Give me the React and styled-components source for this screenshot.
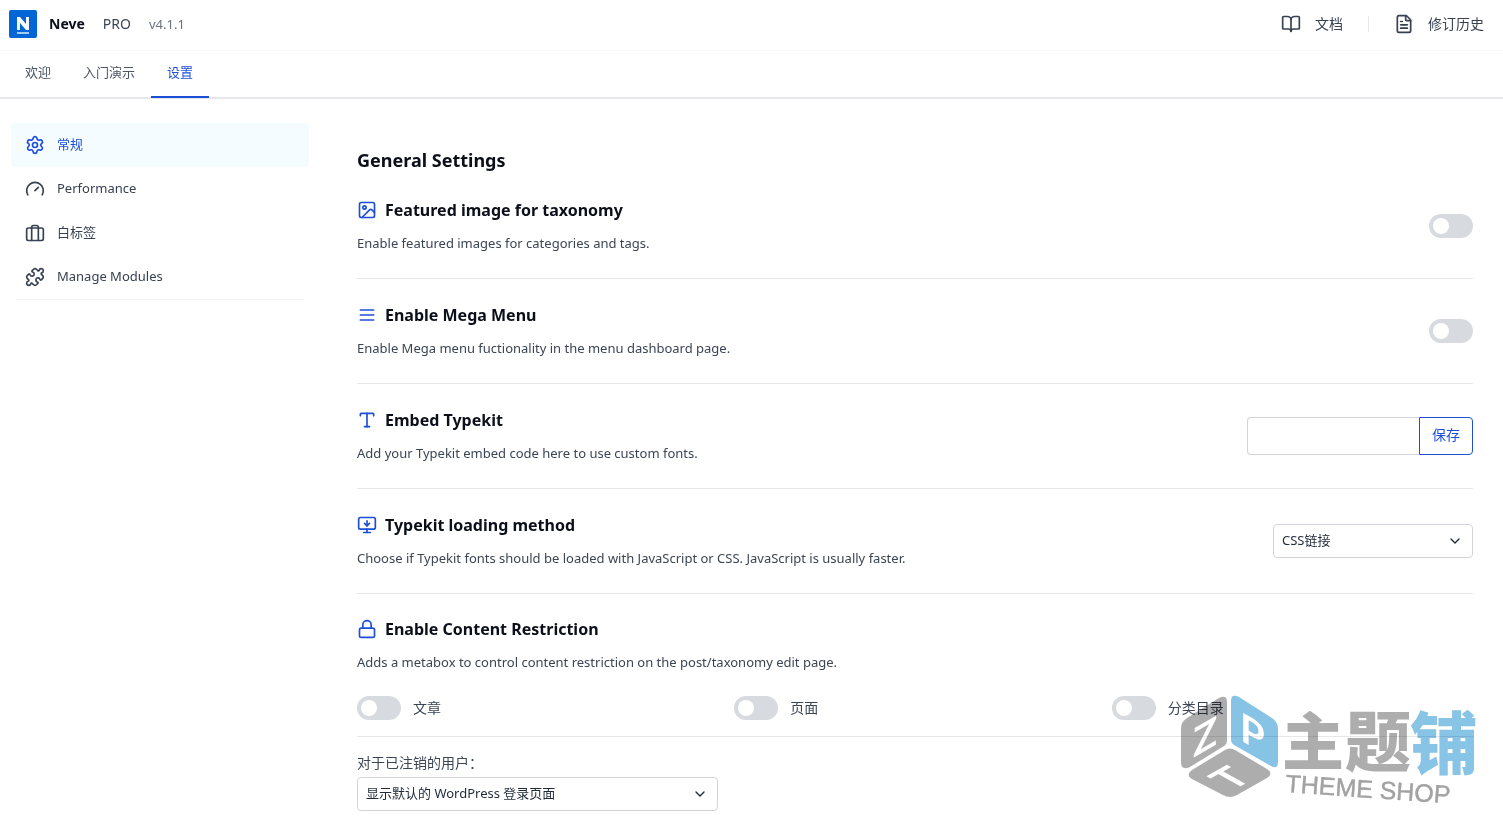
import React, { useState } from "react";
import styled, { createGlobalStyle } from "styled-components";
import {
    BookOpen,
    ChevronDown,
    FileText,
    Gauge,
    Image as ImageIcon,
    Lock,
    MonitorDown,
    Puzzle,
    Settings,
    Type,
} from "lucide-react";

const GlobalStyle = createGlobalStyle`
    * {
        box-sizing: border-box;
    }

    body {
        margin: 0;
        background: #fff;
        color: #3b4554;
        font-family: "Noto Sans", "Noto Sans CJK SC", sans-serif;
        font-size: 13px;
        line-height: 20px;
    }

    button, input, select {
        font: inherit;
        color: inherit;
    }
`

const Page = styled.div`
    position: relative;
    min-height: 100vh;
    overflow: hidden;
    background: #fff;
`

const Header = styled.header`
    display: flex;
    align-items: center;
    justify-content: space-between;
    padding: 10px 19px 12px 9px;
    border-bottom: 1px solid #f8f8f9;
`

const Brand = styled.div`
    display: flex;
    align-items: center;
    gap: 18px;
    line-height: 28px;
`

const BrandName = styled.div`
    display: flex;
    align-items: center;
    gap: 12px;
    color: #0b0f19;
    font-size: 14px;
    font-weight: 700;
`

const Plan = styled.span`
    font-size: 14px;
`

const Version = styled.span`
    color: #6b7280;
`

const HeaderLinks = styled.nav`
    display: flex;
    align-items: center;

    a {
        display: flex;
        align-items: center;
        gap: 14px;
        color: #374151;
        font-size: 14px;
        text-decoration: none;
    }

    a + a {
        margin-left: 25px;
        padding-left: 26px;
        background: linear-gradient(#e5e7eb, #e5e7eb) left center / 1px 16px no-repeat;
    }
`

const Tabs = styled.nav`
    display: flex;
    padding-left: 9px;
    border-bottom: 2px solid #e5e7eb;
`

const Tab = styled.a`
    margin-bottom: -1px;
    padding: 11px 16px 14px;
    border-bottom: 2px solid ${({ $active }) => ($active ? "#1d4ed8" : "transparent")};
    color: ${({ $active }) => ($active ? "#1d4ed8" : "#4b5563")};
    text-decoration: none;
`

const Body = styled.div`
    display: flex;
    align-items: flex-start;
    padding: 24px 30px 20px 11px;
    gap: 48px;
`

const Sidebar = styled.nav`
    flex: none;
    width: 298px;
`

const SideItem = styled.a`
    display: flex;
    align-items: center;
    gap: 12px;
    height: 44px;
    padding: 0 14px;
    border-radius: 4px;
    background: ${({ $active }) => ($active ? "#f5fcff" : "transparent")};
    color: ${({ $active }) => ($active ? "#1d4ed8" : "#374151")};
    text-decoration: none;

    span {
        padding-bottom: 2px;
    }
`

const SideRule = styled.hr`
    margin: 0 5px;
    border: 0;
    border-top: 1px solid #f3f4f6;
`

const Main = styled.main`
    flex: 1;
    min-width: 0;
    padding-top: 23px;
`

const PageTitle = styled.h1`
    margin: 0;
    color: #0b0f19;
    font-size: 18px;
    font-weight: 700;
    line-height: 28px;
`

const Section = styled.section`
    display: flex;
    align-items: center;
    justify-content: space-between;
    gap: 24px;
    padding: 24px 0;
    border-bottom: 1px solid #e5e7eb;
`

const SectionTitle = styled.h2`
    display: flex;
    align-items: center;
    gap: 8px;
    margin: 0 0 10px;
    color: #0b0f19;
    font-size: 16px;
    font-weight: 700;
    line-height: 24px;

    svg {
        color: #1d4ed8;
    }
`

const Description = styled.p`
    margin: 0;
    line-height: 22px;
`

const Switch = styled.input`
    appearance: none;
    flex: none;
    display: block;
    width: 44px;
    height: 24px;
    margin: 0;
    padding: 4px;
    border-radius: 12px;
    background: #d7dade;
    cursor: pointer;

    &::before {
        content: "";
        display: block;
        width: 16px;
        height: 16px;
        border-radius: 50%;
        background: #fff;
    }

    &:checked {
        background: #1d4ed8;
    }

    &:checked::before {
        margin-left: 20px;
    }
`

const InputGroup = styled.form`
    display: flex;
    height: 38px;
`

const TextInput = styled.input`
    width: 172px;
    padding: 0 8px;
    border: 1px solid #d1d5db;
    border-right: 0;
    border-radius: 4px 0 0 4px;
`

const SaveButton = styled.button`
    width: 54px;
    padding: 0 0 2px;
    border: 1px solid #1d4ed8;
    border-radius: 0 4px 4px 0;
    background: #fff;
    color: #1d4ed8;
    font-size: 14px;
`

const SelectBox = styled.div`
    display: grid;
    align-items: center;
    width: ${({ $width }) => $width || "100%"};
    color: #1f2937;

    select, svg {
        grid-area: 1 / 1;
    }

    select {
        appearance: none;
        width: 100%;
        height: 34px;
        padding: 0 32px 2px 8px;
        border: 1px solid #d1d5db;
        border-radius: 4px;
        background: #fff;
    }

    svg {
        justify-self: end;
        margin-right: 10px;
        pointer-events: none;
    }
`

const Restriction = styled.section`
    padding-top: 23px;
`

const Columns = styled.div`
    display: grid;
    grid-template-columns: repeat(3, 1fr);
    gap: 16px;
    padding: ${({ $ruled }) => ($ruled ? "23px 0 16px" : "16px 0 0")};
    border-bottom: ${({ $ruled }) => ($ruled ? "1px solid #e5e7eb" : "0")};
`

const SwitchLabel = styled.label`
    display: flex;
    align-items: center;
    gap: 12px;
    font-size: 14px;
`

const Field = styled.div`
    label {
        display: block;
        margin-bottom: 4px;
        font-size: 14px;
    }
`

/* multiply keeps the labels under the mark readable */
const Watermark = styled.svg`
    position: absolute;
    right: 3px;
    bottom: 5px;
    mix-blend-mode: multiply;
    pointer-events: none;
`

const NeveLogo = () => (
    <svg width="28" height="28" viewBox="0 0 28 28" aria-hidden="true">
        <rect width="28" height="28" rx="2" fill="#0366d6" />
        <path d="M8 20V7h3l6 7V7h3v13h-3l-6-7v7z" fill="#fff" />
        <path d="M8 22h12v2H8z" fill="#a5cbf5" />
    </svg>
)

const StrokeIcon = ({ children }) => (
    <svg width="20" height="20" viewBox="0 0 24 24" fill="none" stroke="currentColor" strokeWidth="2" strokeLinecap="round" strokeLinejoin="round" aria-hidden="true">
        {children}
    </svg>
)

const Luggage = () => (
    <StrokeIcon>
        <rect x="2" y="6" width="20" height="15" rx="2" />
        <path d="M8 21V5a2 2 0 0 1 2-2h4a2 2 0 0 1 2 2v16" />
    </StrokeIcon>
)

const MenuLines = () => (
    <StrokeIcon>
        <path d="M4 6h16M4 12h16M4 18h16" />
    </StrokeIcon>
)

const ThemeShopMark = () => (
    <Watermark width="320" height="152" viewBox="0 -20 320 152" aria-hidden="true">
        <g opacity="0.8">
            <path d="M39 4q8-4 8 4v39q0 3-3 5L10 73q-9 4-9-5V34q0-6 6-10z" fill="#999" />
            <path d="M51 7q0-8 8-4l33 21q6 4 6 11v33q0 8-7 4L54 51q-3-2-3-5z" fill="#6ab5de" />
            <path d="M45 56q5-3 10 0l32 19q7 4 0 9l-30 17q-7 4-14 0L12 85q-7-4 0-9z" fill="#999" />
        </g>
        <g fontFamily="Lato, sans-serif" fontSize="40" fontWeight="700" fill="#fff">
            <text transform="translate(13 64) skewY(-30)">Z</text>
            <text transform="translate(60 46) skewY(30)">P</text>
            <text transform="matrix(0.9 -0.5 0.9 0.5 52 97)">T</text>
        </g>
        <g fontFamily="'Noto Sans CJK SC', sans-serif" fontWeight="900" fillOpacity="0.8">
            <text x="102" y="71" fontSize="62" fill="#999">主</text>
            <text x="165" y="72" fontSize="66" fill="#999">题</text>
            <text x="230" y="75" fontSize="68" fill="#6ab5de">铺</text>
        </g>
        <text transform="translate(105 98) rotate(4)" fontFamily="'Liberation Sans', sans-serif" fontSize="25" fill="#999" fillOpacity="0.9" stroke="#999" strokeWidth="0.4">THEME SHOP</text>
    </Watermark>
)

const sideItems = [
    { label: "常规", Icon: Settings, active: true },
    { label: "Performance", Icon: Gauge },
    { label: "白标签", Icon: Luggage },
    { label: "Manage Modules", Icon: Puzzle },
]

const SettingRow = ({ Icon, title, text, children }) => (
    <Section>
        <div>
            <SectionTitle><Icon size={20} />{title}</SectionTitle>
            <Description>{text}</Description>
        </div>
        {children}
    </Section>
)

const Select = ({ options, width, ...rest }) => (
    <SelectBox $width={width}>
        <select {...rest}>
            {options.map(option => (
                <option key={option}>{option}</option>
            ))}
        </select>
        <ChevronDown size={16} />
    </SelectBox>
)

const App = () => {
    const [typekitId, setTypekitId] = useState("")

    return (
        <Page>
            <GlobalStyle />
            <Header>
                <Brand>
                    <BrandName><NeveLogo />Neve</BrandName>
                    <Plan>PRO</Plan>
                    <Version>v4.1.1</Version>
                </Brand>
                <HeaderLinks>
                    <a href="#docs"><BookOpen size={20} />文档</a>
                    <a href="#changelog"><FileText size={20} />修订历史</a>
                </HeaderLinks>
            </Header>
            <Tabs>
                <Tab href="#welcome">欢迎</Tab>
                <Tab href="#starter-sites">入门演示</Tab>
                <Tab href="#settings" $active>设置</Tab>
            </Tabs>
            <Body>
                <Sidebar>
                    {sideItems.map(({ label, Icon, active }) => (
                        <SideItem key={label} href="#settings" $active={active}>
                            <Icon size={20} /><span>{label}</span>
                        </SideItem>
                    ))}
                    <SideRule />
                </Sidebar>
                <Main>
                    <PageTitle>General Settings</PageTitle>
                    <SettingRow Icon={ImageIcon} title="Featured image for taxonomy" text="Enable featured images for categories and tags.">
                        <Switch type="checkbox" role="switch" aria-label="Featured image for taxonomy" />
                    </SettingRow>
                    <SettingRow Icon={MenuLines} title="Enable Mega Menu" text="Enable Mega menu fuctionality in the menu dashboard page.">
                        <Switch type="checkbox" role="switch" aria-label="Enable Mega Menu" />
                    </SettingRow>
                    <SettingRow Icon={Type} title="Embed Typekit" text="Add your Typekit embed code here to use custom fonts.">
                        <InputGroup onSubmit={event => event.preventDefault()}>
                            <TextInput type="text" aria-label="Embed Typekit" value={typekitId} onChange={event => setTypekitId(event.target.value)} />
                            <SaveButton type="submit">保存</SaveButton>
                        </InputGroup>
                    </SettingRow>
                    <SettingRow Icon={MonitorDown} title="Typekit loading method" text="Choose if Typekit fonts should be loaded with JavaScript or CSS. JavaScript is usually faster.">
                        <Select width="200px" aria-label="Typekit loading method" options={["CSS链接", "JavaScript"]} />
                    </SettingRow>
                    <Restriction>
                        <SectionTitle><Lock size={20} />Enable Content Restriction</SectionTitle>
                        <Description>Adds a metabox to control content restriction on the post/taxonomy edit page.</Description>
                        <Columns $ruled>
                            {["文章", "页面", "分类目录"].map(label => (
                                <SwitchLabel key={label}>
                                    <Switch type="checkbox" role="switch" />{label}
                                </SwitchLabel>
                            ))}
                        </Columns>
                        <Columns>
                            <Field>
                                <label htmlFor="logged-out">对于已注销的用户：</label>
                                <Select id="logged-out" options={["显示默认的 WordPress 登录页面"]} />
                            </Field>
                        </Columns>
                    </Restriction>
                </Main>
            </Body>
            <ThemeShopMark />
        </Page>
    );
}

export default App;
